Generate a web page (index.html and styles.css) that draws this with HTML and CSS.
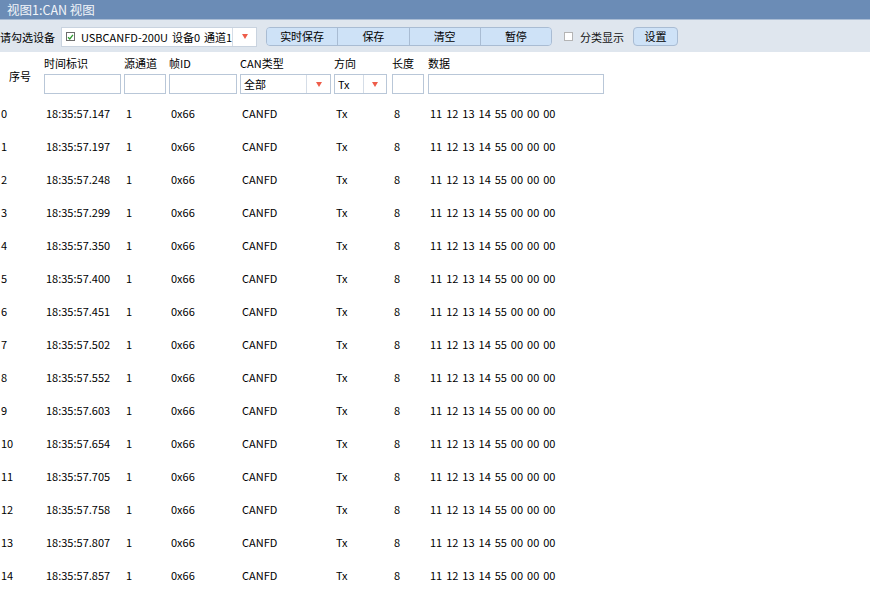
FILE: index.html
```html
<!DOCTYPE html>
<html lang="zh-CN">
<head>
<meta charset="utf-8">
<title>视图1:CAN 视图</title>
<link rel="stylesheet" href="styles.css">
</head>
<body>
<div class="title">视图1:CAN 视图</div>
<div class="toolbar">
  <span class="lbl">请勾选设备</span>
  <div class="devcombo">
    <span class="chk"><svg width="8" height="8" viewBox="0 0 8 8"><path d="M1.2 4.2 L3.2 6.2 L6.8 1.6" fill="none" stroke="#2f9a2f" stroke-width="1.5"/></svg></span>
    <span class="devtxt">USBCANFD-200U 设备0 通道1</span>
    <span class="drop"><i class="tri"></i></span>
  </div>
  <div class="btngroup">
    <button class="seg">实时保存</button>
    <button class="seg">保存</button>
    <button class="seg">清空</button>
    <button class="seg">暂停</button>
  </div>
  <label class="cb"><span class="box"></span>分类显示</label>
  <button class="btn">设置</button>
</div>

<div class="grid head">
  <div class="seqh">序号</div>
  <div class="hl">时间标识</div>
  <div class="hl">源通道</div>
  <div class="hl">帧ID</div>
  <div class="hl">CAN类型</div>
  <div class="hl">方向</div>
  <div class="hl">长度</div>
  <div class="hl">数据</div>
  <div class="in w-time"></div>
  <div class="in w-src"></div>
  <div class="in w-id"></div>
  <div class="in combo w-type"><span class="val">全部</span><span class="drop"><i class="tri"></i></span></div>
  <div class="in combo w-dir"><span class="val">Tx</span><span class="drop"><i class="tri"></i></span></div>
  <div class="in w-len"></div>
  <div class="in w-data"></div>
</div>

<div class="rows">
  <div class="grid row"><span>0</span><span>18:35:57.147</span><span>1</span><span>0x66</span><span>CANFD</span><span>Tx</span><span>8</span><span class="data">11 12 13 14 55 00 00 00</span></div>
  <div class="grid row"><span>1</span><span>18:35:57.197</span><span>1</span><span>0x66</span><span>CANFD</span><span>Tx</span><span>8</span><span class="data">11 12 13 14 55 00 00 00</span></div>
  <div class="grid row"><span>2</span><span>18:35:57.248</span><span>1</span><span>0x66</span><span>CANFD</span><span>Tx</span><span>8</span><span class="data">11 12 13 14 55 00 00 00</span></div>
  <div class="grid row"><span>3</span><span>18:35:57.299</span><span>1</span><span>0x66</span><span>CANFD</span><span>Tx</span><span>8</span><span class="data">11 12 13 14 55 00 00 00</span></div>
  <div class="grid row"><span>4</span><span>18:35:57.350</span><span>1</span><span>0x66</span><span>CANFD</span><span>Tx</span><span>8</span><span class="data">11 12 13 14 55 00 00 00</span></div>
  <div class="grid row"><span>5</span><span>18:35:57.400</span><span>1</span><span>0x66</span><span>CANFD</span><span>Tx</span><span>8</span><span class="data">11 12 13 14 55 00 00 00</span></div>
  <div class="grid row"><span>6</span><span>18:35:57.451</span><span>1</span><span>0x66</span><span>CANFD</span><span>Tx</span><span>8</span><span class="data">11 12 13 14 55 00 00 00</span></div>
  <div class="grid row"><span>7</span><span>18:35:57.502</span><span>1</span><span>0x66</span><span>CANFD</span><span>Tx</span><span>8</span><span class="data">11 12 13 14 55 00 00 00</span></div>
  <div class="grid row"><span>8</span><span>18:35:57.552</span><span>1</span><span>0x66</span><span>CANFD</span><span>Tx</span><span>8</span><span class="data">11 12 13 14 55 00 00 00</span></div>
  <div class="grid row"><span>9</span><span>18:35:57.603</span><span>1</span><span>0x66</span><span>CANFD</span><span>Tx</span><span>8</span><span class="data">11 12 13 14 55 00 00 00</span></div>
  <div class="grid row"><span>10</span><span>18:35:57.654</span><span>1</span><span>0x66</span><span>CANFD</span><span>Tx</span><span>8</span><span class="data">11 12 13 14 55 00 00 00</span></div>
  <div class="grid row"><span>11</span><span>18:35:57.705</span><span>1</span><span>0x66</span><span>CANFD</span><span>Tx</span><span>8</span><span class="data">11 12 13 14 55 00 00 00</span></div>
  <div class="grid row"><span>12</span><span>18:35:57.758</span><span>1</span><span>0x66</span><span>CANFD</span><span>Tx</span><span>8</span><span class="data">11 12 13 14 55 00 00 00</span></div>
  <div class="grid row"><span>13</span><span>18:35:57.807</span><span>1</span><span>0x66</span><span>CANFD</span><span>Tx</span><span>8</span><span class="data">11 12 13 14 55 00 00 00</span></div>
  <div class="grid row"><span>14</span><span>18:35:57.857</span><span>1</span><span>0x66</span><span>CANFD</span><span>Tx</span><span>8</span><span class="data">11 12 13 14 55 00 00 00</span></div>
</div>
</body>
</html>
```

FILE: styles.css
```css
* { box-sizing: border-box; }
html, body { margin: 0; padding: 0; background: #fff; }
body {
  font-family: "Noto Sans CJK SC", "Noto Sans", sans-serif;
  font-size: 11px;
  color: #000;
  overflow: hidden;
  width: 870px;
  height: 597px;
}

.title {
  height: 20px;
  background: #6b8cb6;
  border-bottom: 1px solid #a9bcd4;
  color: #f2f5f9;
  font-size: 12.5px;
  line-height: 19px;
  padding-left: 7px;
}

.toolbar {
  height: 32px;
  background: #dfe6ee;
  display: flex;
  align-items: center;
  padding-top: 1px;
}
.lbl { width: 55px; white-space: nowrap; flex: none; }

.devcombo {
  margin-left: 6px;
  width: 196px;
  height: 20px;
  background: #fff;
  border: 1px solid #c9d3df;
  display: flex;
  align-items: center;
  flex: none;
}
.chk {
  width: 9px; height: 9px;
  margin-left: 4px;
  border: 1px solid #6d6d6d;
  background: #fff;
  display: flex; align-items: center; justify-content: center;
  flex: none;
}
.devtxt { margin-left: 6px; white-space: nowrap; flex: 1; overflow: hidden; word-spacing: 1.5px; }
.drop {
  width: 24px; height: 100%;
  border-left: 1px solid #d5dde7;
  display: flex; align-items: center; justify-content: center;
  flex: none;
}
.tri {
  width: 0; height: 0;
  border-left: 3px solid transparent;
  border-right: 3px solid transparent;
  border-top: 5px solid #ee5d4a;
  display: block;
}

.btngroup {
  margin-left: 9px;
  width: 286px;
  height: 19px;
  display: flex;
  border: 1px solid #a9bcd3;
  border-radius: 4px;
  overflow: hidden;
  background: #cee2f7;
  flex: none;
}
.seg {
  flex: 1;
  border: 0;
  border-left: 1px solid #a9bcd3;
  background: #cee2f7;
  font: inherit;
  color: #000;
  padding: 0;
  line-height: 17px;
}
.seg:first-child { border-left: 0; }

.cb {
  margin-left: 12px;
  display: flex;
  align-items: center;
  color: #111;
  flex: none;
}
.box {
  width: 9px; height: 9px;
  border: 1px solid #b4b4b4;
  background: #fff;
  margin-right: 7px;
}
.btn {
  margin-left: 9px;
  width: 45px;
  height: 19px;
  border: 1px solid #a9bcd3;
  border-radius: 4px;
  background: #cee2f7;
  font: inherit;
  color: #000;
  padding: 0;
  line-height: 17px;
}

.grid {
  display: grid;
  grid-template-columns: 44px 80px 45px 71px 94px 58px 36px 1fr;
}
.head {
  height: 44px;
  padding-top: 4px;
  grid-template-rows: 14px 20px;
  row-gap: 4px;
}
.seqh {
  grid-row: 1 / span 2;
  grid-column: 1;
  align-self: center;
  padding-left: 9px;
  padding-top: 2px;
}
.hl { line-height: 14px; white-space: nowrap; }
.in {
  height: 20px;
  border: 1px solid #b9c7d8;
  background: #fff;
}
.head .in:nth-child(9) { grid-column: 2; }
.w-time { width: 77px; }
.w-src { width: 42px; }
.w-id { width: 68px; }
.w-type { width: 91px; }
.w-dir { width: 53px; }
.w-len { width: 32px; }
.w-data { width: 176px; }
.combo { display: flex; align-items: center; }
.combo .val { flex: 1; padding-left: 3px; line-height: 18px; }
.w-type .drop { width: 24px; }
.w-dir .drop { width: 23px; }

.row {
  height: 33px;
  align-items: center;
}
.row span { padding-left: 2px; white-space: nowrap; }
.row span:first-child { padding-left: 1px; }
.row .data { word-spacing: 1.5px; }
```
